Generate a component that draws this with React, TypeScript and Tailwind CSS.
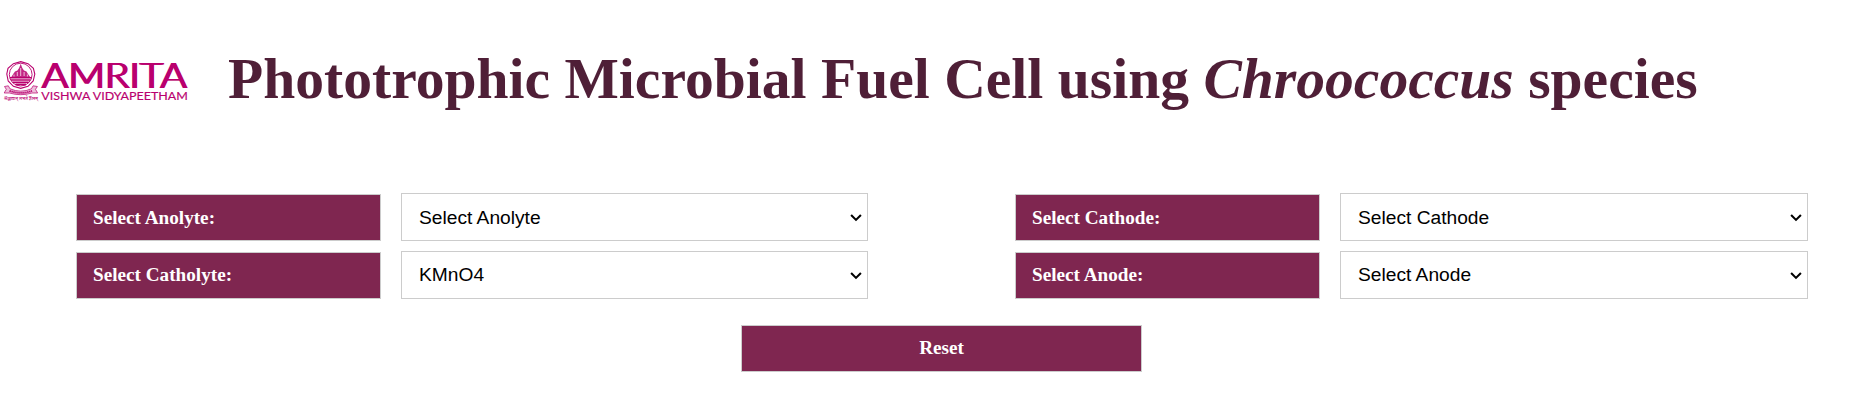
import React, { useState } from "react";

type FieldProps = {
  id: string;
  label: string;
  options: string[];
  initial: string;
  selectWidth: string;
  labelPad?: string;
  selectPad?: string;
};

function Field({ id, label, options, initial, selectWidth, labelPad = "pb-0", selectPad = "pt-0.5" }: FieldProps) {
  const [value, setValue] = useState(initial);
  return (
    <div className="flex h-12 items-end gap-5">
      <label
        htmlFor={id}
        className={`flex h-[47px] w-[305px] items-center border border-[#ccc] bg-[#7f2650] pl-4 font-['Liberation_Serif',serif] text-[19.2px] leading-[22px] font-bold text-white ${labelPad}`}
      >
        {label}
      </label>
      <div className={`relative h-12 ${selectWidth}`}>
        <select
          id={id}
          value={value}
          onChange={(e) => setValue(e.target.value)}
          className={`h-12 w-full appearance-none rounded-none border border-[#ccc] bg-white px-[17px] font-['Liberation_Sans',sans-serif] text-[19.2px] text-black ${selectPad}`}
        >
          {options.map((o) => (
            <option key={o}>{o}</option>
          ))}
        </select>
        <svg className="pointer-events-none absolute top-[20px] right-[5px] h-[10px] w-[14px]" viewBox="0 0 14 10" fill="none" stroke="#000" strokeWidth="2.1">
          <path d="M2.1 2.1 7 6.9 11.9 2.1" />
        </svg>
      </div>
    </div>
  );
}

function Logo() {
  return (
    <svg className="h-[60px] w-[200px] shrink-0" viewBox="0 0 200 60" fill="none" stroke="#b9006e">
      <path d="M20.7 11.6 28 13.7 33.4 18.4 34.8 24 33.2 31 28 36.3 20.7 38.4 13.4 36.3 8.2 31 6.8 24 8 18.4 13.4 13.7Z" strokeWidth="1.1" />
      <circle cx="20.7" cy="24.6" r="11.4" strokeWidth=".9" />
      <path d="M20.7 13.8 22.3 18 24 20.5 26.5 21.5 28 24 30.5 27.5H11L13.2 24 15 21.5 17.4 20.5 19.1 18Z" fill="#b9006e" fillOpacity=".85" stroke="none" />
      <path d="M20.7 18V26M17.3 22v4M24.1 22v4M14 24.5v2M27.4 24.5v2" stroke="#fff" strokeWidth=".7" />
      <path d="M10 27.8H31.4M11 30H30.4M12.6 32.2H28.8M15.4 34.4H26" strokeWidth="1.6" />
      <path d="M4.5 36.5 8.3 35.8 10 38.8Q20.7 43.5 31.4 38.8L33.1 35.8 37.4 36.5 35.5 39.3 37.6 43 32 43Q20.7 46.4 9.5 43L4.2 43 6.3 39.3Z" fill="#b9006e" fillOpacity=".25" strokeWidth=".7" />
      <path d="M9.5 40.8Q20.7 45 32 40.8" strokeWidth="1.8" strokeDasharray="1.4 .6" />
      <g fill="#b9006e" stroke="none">
        <text x="4" y="50.3" fontFamily="Noto Sans, sans-serif" fontSize="4.6" fontWeight="500" textLength="34" lengthAdjust="spacingAndGlyphs">श्रद्धावान् लभते ज्ञानम्</text>
        <g id="wordmark">
          <text x="40.5" y="37.8" fontFamily="Lato, sans-serif" fontSize="36" fontWeight="300" textLength="145" lengthAdjust="spacingAndGlyphs">AMRITA</text>
        </g>
        <use href="#wordmark" x="1" />
        <use href="#wordmark" x="2" />
        <use href="#wordmark" x="2.8" />
        <text x="41.3" y="49.6" fontFamily="Lato, sans-serif" fontSize="11.4" fontWeight="400" textLength="146.6" lengthAdjust="spacingAndGlyphs" stroke="#b9006e" strokeWidth=".15">VISHWA VIDYAPEETHAM</text>
      </g>
    </svg>
  );
}

export default function App() {
  return (
    <div className="h-[409px] w-[1857px] overflow-hidden bg-white">
      <header className="flex h-[193px] items-start pt-[50px]">
        <Logo />
        <h1 className="-mt-[4px] ml-[28px] font-['Liberation_Serif',serif] text-[57.6px] leading-[66px] font-bold whitespace-nowrap text-[#4f1f37]">
          Phototrophic Microbial Fuel Cell using <em>Chroococcus</em> species
        </h1>
      </header>
      <main>
        <div className="flex gap-[147px] pl-[76px]">
          <div className="flex flex-col gap-[10px]">
            <Field id="anolyte" label="Select Anolyte:" options={["Select Anolyte"]} initial="Select Anolyte" selectWidth="w-[467px]" />
            <Field id="catholyte" label="Select Catholyte:" options={["Select Catholyte", "KMnO4"]} initial="KMnO4" selectWidth="w-[467px]" labelPad="pb-0.5" selectPad="pt-px" />
          </div>
          <div className="flex flex-col gap-[10px]">
            <Field id="cathode" label="Select Cathode:" options={["Select Cathode"]} initial="Select Cathode" selectWidth="w-[468px]" />
            <Field id="anode" label="Select Anode:" options={["Select Anode"]} initial="Select Anode" selectWidth="w-[468px]" labelPad="pb-0.5" selectPad="pt-px" />
          </div>
        </div>
        <button className="mt-[26px] ml-[741px] block h-[47px] w-[401px] border border-[#ccc] bg-[#7f2650] pb-0.5 font-['Liberation_Serif',serif] text-[19.2px] leading-[22px] font-bold text-white">
          Reset
        </button>
      </main>
    </div>
  );
}
